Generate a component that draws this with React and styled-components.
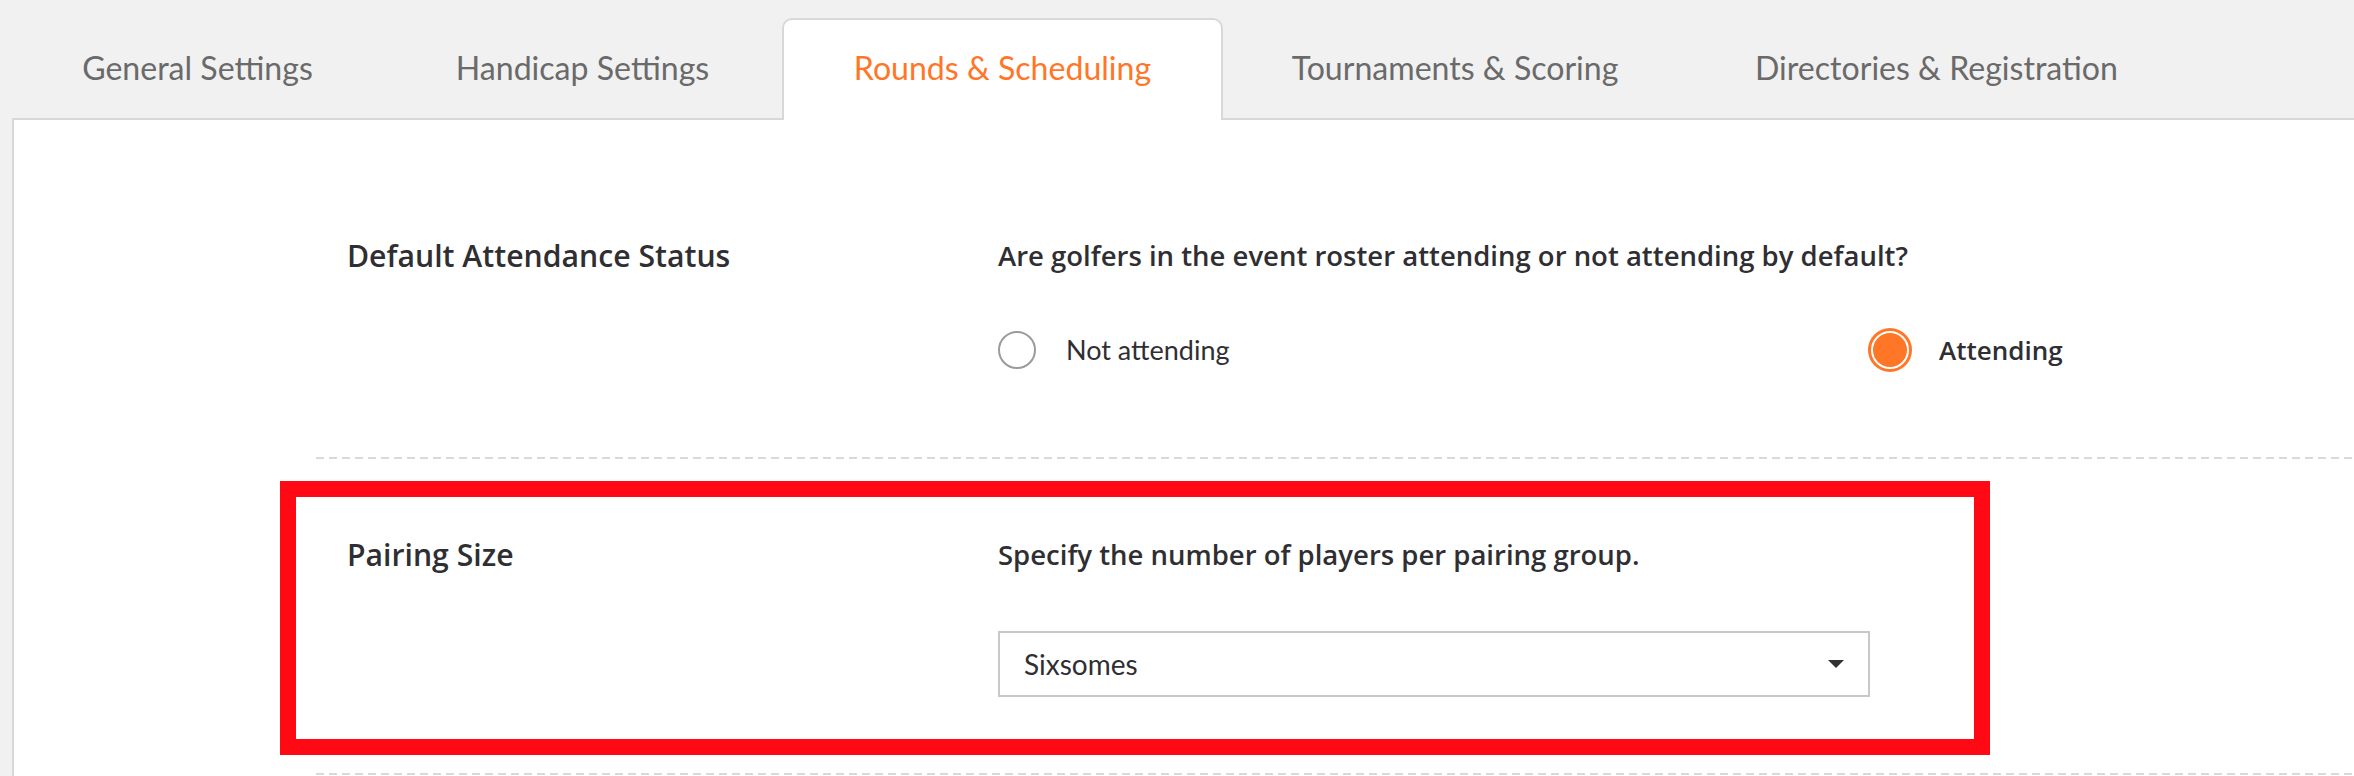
import React from 'react';
import styled, { createGlobalStyle } from 'styled-components';

const ORANGE = '#ff7627';
const BORDER = '#d8d8d8';
const TEXT = '#2f2f33';
const REGULAR = 'Lato, "Open Sans", "Liberation Sans", sans-serif';
const STRONG = '"Open Sans", Lato, "Liberation Sans", sans-serif';

const GlobalStyle = createGlobalStyle`
  html, body {
    margin: 0;
    padding: 0;
    overflow: hidden;
    background: #f1f1f1;
  }
  body {
    font-family: ${REGULAR};
  }
`;

const Page = styled.div`
  width: 2354px;
  height: 776px;
  overflow: hidden;
  background: #f1f1f1;
  display: flex;
  flex-direction: column;
`;

const TabBar = styled.div`
  display: flex;
  align-items: flex-end;
  height: 120px;
  padding-left: 12px;
  box-sizing: border-box;
  position: relative;
  z-index: 1;
  flex-shrink: 0;
`;

const Tab = styled.div`
  box-sizing: border-box;
  width: ${(p) => p.$w}px;
  height: 102px;
  padding-top: 28px;
  text-align: center;
  font-family: ${REGULAR};
  font-size: 32.1px;
  line-height: 40px;
  white-space: nowrap;
  color: ${(p) => (p.$active ? ORANGE : '#6a6a6a')};
  background: ${(p) => (p.$active ? '#fff' : 'transparent')};
  border: 2px solid ${(p) => (p.$active ? BORDER : 'transparent')};
  border-bottom: none;
  border-radius: 10px 10px 0 0;
  cursor: pointer;
`;

const Panel = styled.div`
  flex: 1;
  margin: -2px 0 0 12px;
  background: #fff;
  border-top: 2px solid ${BORDER};
  border-left: 2px solid ${BORDER};
  padding-top: 40px;
`;

const Sections = styled.div`
  margin-left: 302px;
`;

const Section = styled.div`
  position: relative;
  display: grid;
  grid-template-columns: 651px 1746px;
  padding: 78px 0 0 31px;
`;

const Label = styled.div`
  font-family: ${STRONG};
  font-size: 30.2px;
  line-height: 36px;
  font-weight: 600;
  color: ${TEXT};
  white-space: nowrap;
`;

const Question = styled.div`
  font-family: ${STRONG};
  font-size: 27.5px;
  line-height: 36px;
  font-weight: 600;
  color: ${TEXT};
  white-space: nowrap;
`;

const Field = styled.div`
  display: flex;
  flex-direction: column;
`;

const RadioGroup = styled.div`
  display: grid;
  grid-template-columns: 873px 873px;
  margin: 57px 0 88px;
`;

const RadioOption = styled.label`
  display: flex;
  align-items: center;
  gap: 30px;
  cursor: pointer;
`;

const RadioCircle = styled.span`
  box-sizing: border-box;
  width: 38px;
  height: 38px;
  border-radius: 50%;
  flex-shrink: 0;
  background: ${(p) => (p.$checked ? ORANGE : '#fff')};
  border: 2px solid ${(p) => (p.$checked ? '#fff' : '#9b9b9b')};
  box-shadow: ${(p) => (p.$checked ? `0 0 0 3px ${ORANGE}` : 'none')};
`;

const RadioText = styled.span`
  font-family: ${(p) => (p.$checked ? STRONG : REGULAR)};
  font-size: ${(p) => (p.$checked ? '26px' : '27px')};
  line-height: 32px;
  font-weight: ${(p) => (p.$checked ? 600 : 400)};
  color: ${TEXT};
`;

const SelectBox = styled.div`
  box-sizing: border-box;
  width: 872px;
  height: 66px;
  margin: 58px 0 76px;
  border: 2px solid #c8c8c8;
  padding: 0 24px;
  display: flex;
  align-items: center;
  justify-content: space-between;
  font-family: ${REGULAR};
  font-size: 28px;
  color: ${TEXT};
  background: #fff;
`;

const Divider = styled.div`
  height: 2px;
  background: repeating-linear-gradient(to right, #d9d9d9 0 8px, transparent 8px 13px);
`;

const Highlight = styled.div`
  position: absolute;
  top: 22px;
  left: -36px;
  width: 1710px;
  height: 274px;
  box-sizing: border-box;
  border: 16px solid #ff0a14;
  pointer-events: none;
`;

const tabs = [
  { label: 'General Settings', w: 371 },
  { label: 'Handicap Settings', w: 399 },
  { label: 'Rounds & Scheduling', w: 441, active: true },
  { label: 'Tournaments & Scoring', w: 464 },
  { label: 'Directories & Registration', w: 499 },
];

const Radio = ({ checked, children }) => (
  <RadioOption>
    <RadioCircle $checked={checked} />
    <RadioText $checked={checked}>{children}</RadioText>
  </RadioOption>
);

export default function App() {
  return (
    <Page>
      <GlobalStyle />
      <TabBar>
        {tabs.map((t) => (
          <Tab key={t.label} $w={t.w} $active={t.active}>
            {t.label}
          </Tab>
        ))}
      </TabBar>
      <Panel>
        <Sections>
          <Section>
            <Label>Default Attendance Status</Label>
            <Field>
              <Question>Are golfers in the event roster attending or not attending by default?</Question>
              <RadioGroup>
                <Radio>Not attending</Radio>
                <Radio checked>Attending</Radio>
              </RadioGroup>
            </Field>
          </Section>
          <Divider />
          <Section>
            <Highlight />
            <Label>Pairing Size</Label>
            <Field>
              <Question>Specify the number of players per pairing group.</Question>
              <SelectBox>
                <span>Sixsomes</span>
                <svg width="16" height="8" viewBox="0 0 16 8">
                  <polygon points="0,0 16,0 8,8" fill="#333" />
                </svg>
              </SelectBox>
            </Field>
          </Section>
          <Divider />
        </Sections>
      </Panel>
    </Page>
  );
}
